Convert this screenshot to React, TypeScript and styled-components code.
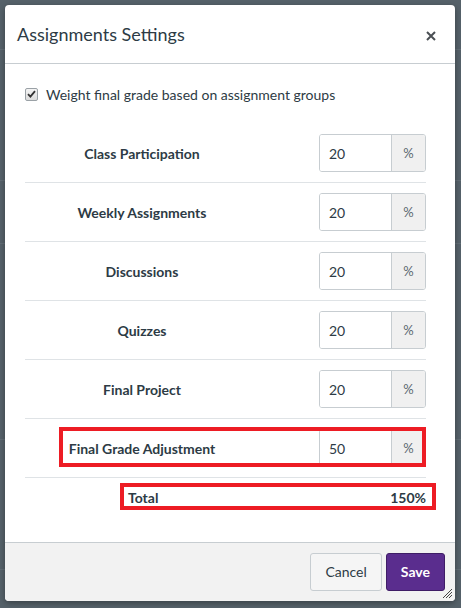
import styled, { createGlobalStyle } from "styled-components";

const GlobalStyle = createGlobalStyle`
  html, body {
    margin: 0;
    padding: 0;
  }
  body {
    height: 608px;
    overflow: hidden;
    font-family: Lato, "Noto Sans", sans-serif;
    background-color: #56626a;
    background-image:
      linear-gradient(#626e76, #626e76),
      linear-gradient(#626e76, #626e76),
      linear-gradient(#626e76, #626e76),
      linear-gradient(#626e76, #626e76),
      linear-gradient(#626e76, #626e76);
    background-repeat: no-repeat;
    background-size: 100% 1px;
    background-position: 0 49px, 0 180px, 0 243px, 0 439px, 0 569px;
  }
`;

const Dialog = styled.div`
  margin: 5px 0 0 5px;
  width: 450px;
  height: 596px;
  background: #fff;
  border-radius: 4px;
  box-shadow: 0 2px 6px rgba(0, 0, 0, 0.35);
  display: flex;
  flex-direction: column;
  overflow: hidden;
  color: #2d3b45;
`;

const Header = styled.div`
  height: 58px;
  flex-shrink: 0;
  display: flex;
  align-items: center;
  justify-content: space-between;
  padding: 0 19px 0 12px;
  border-bottom: 1px solid #c7cdd1;
`;

const Title = styled.h1`
  margin: 0;
  font-size: 18px;
  font-weight: 400;
  color: #2d3b45;
`;

const CloseButton = styled.button`
  border: none;
  background: none;
  padding: 0;
  width: 10px;
  height: 10px;
  display: flex;
  cursor: pointer;
  margin-top: 3px;
`;

const Body = styled.div`
  flex: 1;
  padding: 0 29px 0 20px;
`;

const CheckRow = styled.label`
  display: flex;
  align-items: center;
  gap: 8px;
  height: 60px;
  font-size: 14px;
  color: #2d3b45;
`;

const CheckBox = styled.span`
  width: 11px;
  height: 11px;
  border: 1px solid #9aa1a6;
  border-radius: 2px;
  background: linear-gradient(#f4f4f4, #dcdcdc);
  display: flex;
  align-items: center;
  justify-content: center;
`;

const WeightRow = styled.div<{ $last?: boolean }>`
  position: relative;
  display: grid;
  grid-template-columns: 234px 1fr 107px;
  align-items: center;
  height: 58px;
  border-bottom: 1px solid #dfe3e6;
`;

const Label = styled.span`
  grid-column: 1;
  text-align: center;
  font-size: 14px;
  font-weight: 700;
  color: #2d3b45;
`;

const InputGroup = styled.div`
  grid-column: 3;
  display: flex;
  height: 38px;
  border: 1px solid #c7cdd1;
  border-radius: 3px;
  box-sizing: border-box;
  overflow: hidden;
`;

const Value = styled.span`
  flex: 1;
  display: flex;
  align-items: center;
  padding-left: 9px;
  font-size: 14px;
  background: #fff;
  color: #2d3b45;
`;

const Addon = styled.span`
  width: 33px;
  display: flex;
  align-items: center;
  justify-content: center;
  border-left: 1px solid #c7cdd1;
  background: #f0f0f0;
  font-size: 13px;
  color: #5b6870;
`;

const Highlight = styled.div<{ $left: number; $top: number; $width: number; $height: number }>`
  position: absolute;
  left: ${(p) => p.$left}px;
  top: ${(p) => p.$top}px;
  width: ${(p) => p.$width}px;
  height: ${(p) => p.$height}px;
  border: 4px solid #ed1c24;
  box-sizing: border-box;
  pointer-events: none;
`;

const TotalRow = styled.div`
  position: relative;
  display: flex;
  justify-content: space-between;
  align-items: center;
  height: 38px;
  padding-left: 103px;
  font-size: 14px;
  font-weight: 700;
  color: #2d3b45;
`;

const Footer = styled.div`
  height: 57px;
  flex-shrink: 0;
  position: relative;
  display: flex;
  align-items: center;
  justify-content: flex-end;
  gap: 4px;
  padding: 0 10px 1px 0;
  background: #f2f2f2;
  border-top: 1px solid #c7cdd1;
`;

const Button = styled.button<{ $primary?: boolean }>`
  height: 38px;
  padding: 0 14px;
  border-radius: 3px;
  font-family: Lato, "Noto Sans", sans-serif;
  font-size: 14px;
  font-weight: ${(p) => (p.$primary ? 700 : 400)};
  color: ${(p) => (p.$primary ? "#fff" : "#2d3b45")};
  background: ${(p) => (p.$primary ? "#5a2d8e" : "#f5f5f5")};
  border: 1px solid ${(p) => (p.$primary ? "#3f1d66" : "#c7cdd1")};
  cursor: pointer;
`;

const Grip = styled.svg`
  position: absolute;
  right: 3px;
  bottom: 3px;
`;

const groups = [
  { name: "Class Participation", value: 20 },
  { name: "Weekly Assignments", value: 20 },
  { name: "Discussions", value: 20 },
  { name: "Quizzes", value: 20 },
  { name: "Final Project", value: 20 },
  { name: "Final Grade Adjustment", value: 50, flagged: true },
];

export default function App() {
  const total = groups.reduce((sum, g) => sum + g.value, 0);
  return (
    <>
      <GlobalStyle />
      <Dialog>
        <Header>
          <Title>Assignments Settings</Title>
          <CloseButton aria-label="Close">
            <svg width="10" height="10" viewBox="0 0 10 10">
              <path d="M1 1 L9 9 M9 1 L1 9" stroke="#4a4f53" strokeWidth="2" />
            </svg>
          </CloseButton>
        </Header>
        <Body>
          <CheckRow>
            <CheckBox>
              <svg width="9" height="8" viewBox="0 0 9 8">
                <path d="M1 4.2 L3.4 6.6 L8 1.2" stroke="#333" strokeWidth="1.8" fill="none" />
              </svg>
            </CheckBox>
            Weight final grade based on assignment groups
          </CheckRow>
          {groups.map((g) => (
            <WeightRow key={g.name}>
              <Label>{g.name}</Label>
              <InputGroup>
                <Value>{g.value}</Value>
                <Addon>%</Addon>
              </InputGroup>
              {g.flagged && <Highlight $left={34} $top={8} $width={367} $height={40} />}
            </WeightRow>
          ))}
          <TotalRow>
            <span>Total</span>
            <span>{total}%</span>
            <Highlight $left={95} $top={5} $width={316} $height={27} />
          </TotalRow>
        </Body>
        <Footer>
          <Button>Cancel</Button>
          <Button $primary>Save</Button>
          <Grip width="10" height="10" viewBox="0 0 10 10">
            <path d="M1 10 L10 1 M4 10 L10 4 M7 10 L10 7" stroke="#444" strokeWidth="1" />
          </Grip>
        </Footer>
      </Dialog>
    </>
  );
}
